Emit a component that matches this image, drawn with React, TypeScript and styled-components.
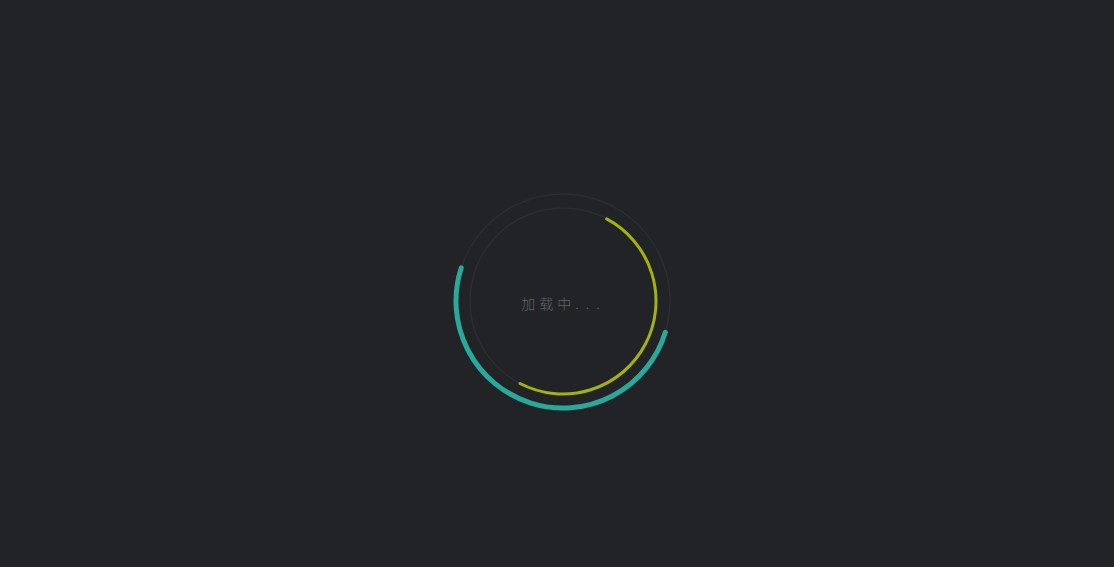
import React from "react";
import styled, { createGlobalStyle } from "styled-components";

const GlobalStyle = createGlobalStyle`
  html, body {
    margin: 0;
    padding: 0;
    background: #222327;
  }
  #root {
    height: 100vh;
  }
`;

const Screen = styled.div`
  height: 100%;
  display: flex;
  align-items: center;
  justify-content: center;
  padding: 35px 0 0 12px;
  box-sizing: border-box;
  background: #222327;
`;

const Loader = styled.div`
  position: relative;
  width: 230px;
  height: 230px;
  display: flex;
  align-items: center;
  justify-content: center;
`;

const Rings = styled.svg`
  position: absolute;
  inset: 0;
`;

const Label = styled.span`
  position: relative;
  font-family: "Noto Sans CJK SC", "Noto Sans", sans-serif;
  font-size: 14px;
  font-weight: 300;
  letter-spacing: 4px;
  color: #616367;
  margin-top: 3px;
  margin-left: 2px;
`;

const Dots = styled.span`
  letter-spacing: 7px;
`;

const C = 115;

function arc(r: number, a0: number, a1: number, sweep: 0 | 1) {
  const rad = (d: number) => (d * Math.PI) / 180;
  const x0 = C + r * Math.cos(rad(a0));
  const y0 = C + r * Math.sin(rad(a0));
  const x1 = C + r * Math.cos(rad(a1));
  const y1 = C + r * Math.sin(rad(a1));
  const span = sweep ? (a1 - a0 + 360) % 360 : (a0 - a1 + 360) % 360;
  const large = span > 180 ? 1 : 0;
  return `M ${x0} ${y0} A ${r} ${r} 0 ${large} ${sweep} ${x1} ${y1}`;
}

export default function App() {
  return (
    <>
      <GlobalStyle />
      <Screen>
        <Loader>
          <Rings width="230" height="230" viewBox="0 0 230 230">
            <circle cx={C} cy={C} r={107} fill="none" stroke="#2b2d32" strokeWidth={1.5} />
            <circle cx={C} cy={C} r={93} fill="none" stroke="#2b2d32" strokeWidth={1.5} />
            <path
              d={arc(107, 198, 17, 0)}
              fill="none"
              stroke="#29a999"
              strokeWidth={5}
              strokeLinecap="round"
            />
            <path
              d={arc(93, 298, 117.5, 1)}
              fill="none"
              stroke="#a2b310"
              strokeWidth={3}
              strokeLinecap="round"
            />
          </Rings>
          <Label>
            加载中<Dots>...</Dots>
          </Label>
        </Loader>
      </Screen>
    </>
  );
}
